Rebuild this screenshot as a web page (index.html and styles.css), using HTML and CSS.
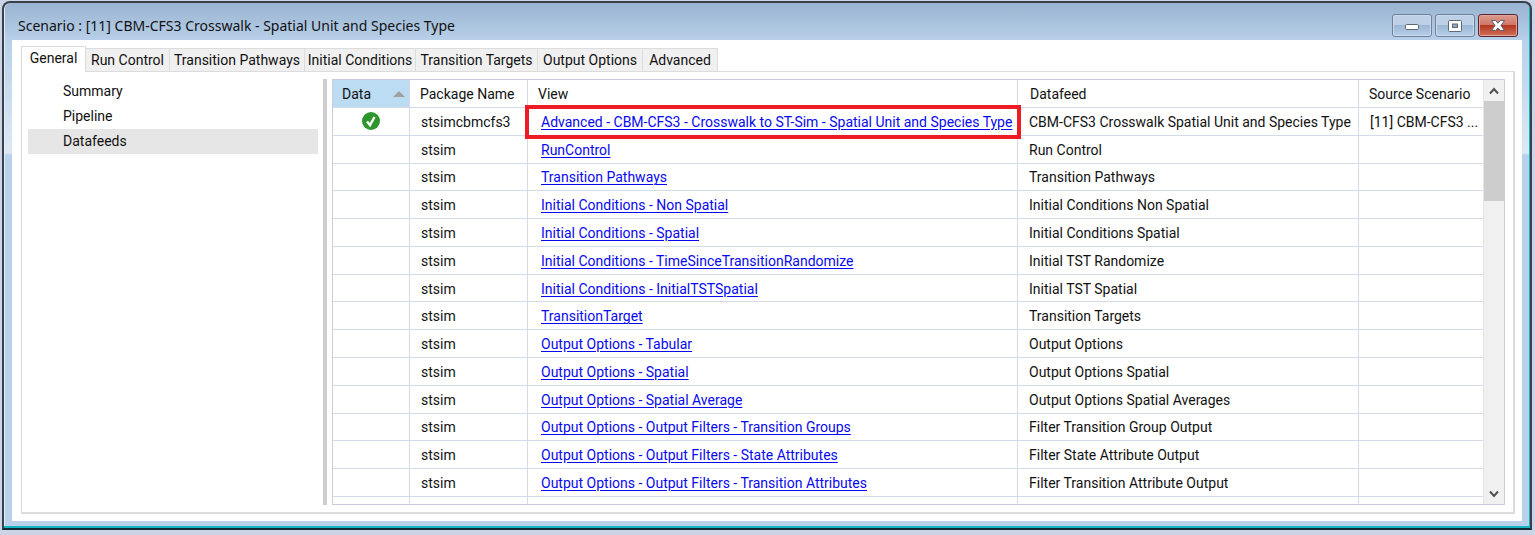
FILE: index.html
```
<!DOCTYPE html>
<html lang="en">
<head>
<meta charset="utf-8">
<title>Scenario : [11] CBM-CFS3 Crosswalk</title>
<link rel="stylesheet" href="styles.css">
</head>
<body>
<main class="window">
  <header class="titlebar">
    <h1 class="title">Scenario : [11] CBM-CFS3 Crosswalk - Spatial Unit and Species Type</h1>
    <div class="controls">
      <button class="control" aria-label="Minimize"><svg width="16" height="14" viewBox="0 0 16 14"><rect x="1.5" y="5.5" width="13" height="5" rx="1" fill="#fff" stroke="#5d6878"/></svg></button>
      <button class="control" aria-label="Maximize"><svg width="16" height="14" viewBox="0 0 16 14"><rect x="1.5" y="1.5" width="13" height="11" rx="1" fill="#fff" stroke="#5d6878"/><rect x="5.5" y="5" width="5" height="3.5" fill="#8ea8c6" stroke="#5d6878"/></svg></button>
      <button class="control close" aria-label="Close"><svg width="16" height="14" viewBox="0 0 16 14"><path d="M1.5 1.5h4L8 4.2l2.500-2.700h4L11 6.500l3.500 5h-4L8 9l-2.500 2.500h-4l3.500-5z" fill="#fff" stroke="#59616f" stroke-linejoin="round"/></svg></button>
    </div>
  </header>
  <div class="client">
    <div class="tabs" role="tablist">
      <button class="tab active" role="tab" aria-selected="true">General</button>
      <button class="tab" role="tab">Run Control</button>
      <button class="tab" role="tab">Transition Pathways</button>
      <button class="tab" role="tab">Initial Conditions</button>
      <button class="tab" role="tab">Transition Targets</button>
      <button class="tab" role="tab">Output Options</button>
      <button class="tab" role="tab">Advanced</button>
    </div>
    <div class="panel">
      <nav class="side">
        <a class="item" href="#">Summary</a>
        <a class="item" href="#">Pipeline</a>
        <a class="item selected" href="#">Datafeeds</a>
      </nav>
      <div class="splitter"></div>
      <div class="grid">
        <table class="feeds">
          <colgroup><col class="c-data"><col class="c-package"><col class="c-view"><col class="c-feed"><col class="c-source"></colgroup>
          <thead>
            <tr><th class="sorted"><span class="sort">Data<svg width="12" height="6" viewBox="0 0 12 6"><path d="M0 6 6 0l6 6z" fill="#a0a0a0"/></svg></span></th><th>Package Name</th><th>View</th><th class="feedhead">Datafeed</th><th>Source Scenario</th></tr>
          </thead>
          <tbody>
            <tr><td class="status"><svg width="18" height="18" viewBox="0 0 18 18" role="img" aria-label="Has data"><circle cx="9" cy="9" r="9" fill="#2c962c"/><path d="m5 9.500 3 3.500 4.500-8" fill="none" stroke="#fff" stroke-width="2.500"/></svg></td><td>stsimcbmcfs3</td><td class="view marked"><a href="#">Advanced - CBM-CFS3 - Crosswalk to ST-Sim - Spatial Unit and Species Type</a></td><td>CBM-CFS3 Crosswalk Spatial Unit and Species Type</td><td>[11] CBM-CFS3 ...</td></tr>
            <tr><td></td><td>stsim</td><td class="view"><a href="#">RunControl</a></td><td>Run Control</td><td></td></tr>
            <tr><td></td><td>stsim</td><td class="view"><a href="#">Transition Pathways</a></td><td>Transition Pathways</td><td></td></tr>
            <tr><td></td><td>stsim</td><td class="view"><a href="#">Initial Conditions - Non Spatial</a></td><td>Initial Conditions Non Spatial</td><td></td></tr>
            <tr><td></td><td>stsim</td><td class="view"><a href="#">Initial Conditions - Spatial</a></td><td>Initial Conditions Spatial</td><td></td></tr>
            <tr><td></td><td>stsim</td><td class="view"><a href="#">Initial Conditions - TimeSinceTransitionRandomize</a></td><td>Initial TST Randomize</td><td></td></tr>
            <tr><td></td><td>stsim</td><td class="view"><a href="#">Initial Conditions - InitialTSTSpatial</a></td><td>Initial TST Spatial</td><td></td></tr>
            <tr><td></td><td>stsim</td><td class="view"><a href="#">TransitionTarget</a></td><td>Transition Targets</td><td></td></tr>
            <tr><td></td><td>stsim</td><td class="view"><a href="#">Output Options - Tabular</a></td><td>Output Options</td><td></td></tr>
            <tr><td></td><td>stsim</td><td class="view"><a href="#">Output Options - Spatial</a></td><td>Output Options Spatial</td><td></td></tr>
            <tr><td></td><td>stsim</td><td class="view"><a href="#">Output Options - Spatial Average</a></td><td>Output Options Spatial Averages</td><td></td></tr>
            <tr><td></td><td>stsim</td><td class="view"><a href="#">Output Options - Output Filters - Transition Groups</a></td><td>Filter Transition Group Output</td><td></td></tr>
            <tr><td></td><td>stsim</td><td class="view"><a href="#">Output Options - Output Filters - State Attributes</a></td><td>Filter State Attribute Output</td><td></td></tr>
            <tr><td></td><td>stsim</td><td class="view"><a href="#">Output Options - Output Filters - Transition Attributes</a></td><td>Filter Transition Attribute Output</td><td></td></tr>
            <tr class="partial"><td></td><td></td><td></td><td></td><td></td></tr>
          </tbody>
        </table>
        <div class="scrollbar">
          <button class="arrow" aria-label="Scroll up"><svg width="10" height="8" viewBox="0 0 10 8"><path d="m1 6.500 4-4.500 4 4.500" fill="none" stroke="#505050" stroke-width="2"/></svg></button>
          <div class="thumb"></div>
          <button class="arrow down" aria-label="Scroll down"><svg width="10" height="8" viewBox="0 0 10 8"><path d="m1 1.500 4 4.500 4-4.500" fill="none" stroke="#505050" stroke-width="2"/></svg></button>
        </div>
      </div>
    </div>
  </div>
</main>
</body>
</html>
```
FILE: styles.css
```
* { box-sizing: border-box; }
body {
  margin: 0;
  height: 100vh;
  padding: 1px 3px 5px 2px;
  background: #ccd5e5;
  color: #111;
  font: 14px/20px Roboto, "Liberation Sans", sans-serif;
  overflow: hidden;
}
button { font: inherit; color: inherit; margin: 0; }
.window {
  display: flex;
  flex-direction: column;
  height: 100%;
  padding: 0 8px 7px 8px;
  border: 2px solid #394047;
  border-bottom-color: #122a35;
  border-radius: 8px 8px 0 0;
  background: linear-gradient(#99b4d1, #b9d1ea 39px, #dce9f5 150px, #b9d1ea 152px);
  box-shadow: inset -1px -2px 0 #13b5c5, inset 1px 0 0 #e4eef8;
}
.titlebar {
  flex: none;
  display: flex;
  align-items: flex-start;
  justify-content: space-between;
  height: 37px;
  padding: 11px 4px 0 6px;
}
.title { margin: 0; font: 14px/24px "Noto Sans", "Open Sans", sans-serif; }
.controls { display: flex; gap: 3px; }
.control {
  display: grid;
  place-items: center;
  width: 40px;
  height: 23px;
  padding: 0;
  border: 1px solid #6f819a;
  border-radius: 3px;
  background: linear-gradient(#bdd0e6 50%, #9db8d5 50%, #b6cfea);
  box-shadow: inset 0 0 0 1px #cbdbed;
}
.close {
  border-color: #5c2430;
  background: linear-gradient(#dc9a8c, #cc7566 50%, #b43722 50%, #cf7258);
  box-shadow: inset 0 0 0 1px #dda59b;
}
.client {
  flex: 1;
  min-height: 0;
  display: flex;
  flex-direction: column;
  padding: 6px 7px 7px 9px;
  background: #fff;
}
.tabs {
  flex: none;
  display: grid;
  grid-template-columns: 65px 84px 135px 111px 122px 105px 75px;
  align-items: end;
  height: 25px;
}
.tab {
  height: 23px;
  padding: 0;
  border: 1px solid #dcdcdc;
  border-left: 0;
  border-bottom: 0;
  background: #f0f0f0;
  white-space: nowrap;
}
.tab.active {
  height: 26px;
  margin-bottom: -1px;
  padding-bottom: 3px;
  border-left: 1px solid #dcdcdc;
  background: #fff;
  z-index: 1;
}
.panel {
  flex: 1;
  min-height: 0;
  display: flex;
  padding: 7px 8px 7px 6px;
  border: 1px solid #dcdcdc;
  border-right-width: 2px;
  border-bottom-width: 2px;
}
.side { flex: none; width: 290px; }
.item {
  display: block;
  height: 25px;
  padding-left: 35px;
  line-height: 25px;
  color: inherit;
  text-decoration: none;
}
.selected { background: #e6e6e6; }
.splitter { flex: none; width: 4px; margin: 0 5px; background: #cdcdcd; }
.grid {
  flex: 1;
  min-width: 0;
  display: flex;
  border: 1px solid #cccce0;
}
.feeds {
  flex: 1;
  width: 100%;
  min-width: 0;
  height: 100%;
  table-layout: fixed;
  border-spacing: 0;
}
.c-data { width: 77px; }
.c-package { width: 118px; }
.c-view { width: 490px; }
.c-source { width: 124px; }
th, td {
  padding: 1px 0 0 11px;
  border-right: 1px solid #d3dae8;
  border-bottom: 1px solid #d3dae8;
  text-align: left;
  font-weight: 400;
  line-height: 20px;
  white-space: nowrap;
}
th { height: 28px; padding: 0 0 0 10px; }
th:last-child, td:last-child { border-right: 0; }
.feedhead { padding-left: 12px; }
.sorted { padding-right: 4px; padding-left: 9px; background: #bcdcf4; }
.sort { display: flex; align-items: center; justify-content: space-between; }
.status { padding: 0; text-align: center; }
.status svg { display: block; margin: 0 auto; }
.view { padding-left: 13px; }
.view a { color: #0808f0; text-underline-offset: 2px; }
.marked { position: relative; }
.marked::after {
  content: "";
  position: absolute;
  inset: -3px -4px -4px -3px;
  border: 4px solid #ed1c24;
  pointer-events: none;
}
.partial td { height: 7px; padding: 0; line-height: 0; border-bottom: 0; }
.scrollbar {
  flex: none;
  display: flex;
  flex-direction: column;
  width: 21px;
  background: #f0f0f0;
  border-left: 1px solid #e4e4ec;
}
.arrow {
  display: grid;
  place-items: center;
  height: 21px;
  padding: 0;
  border: 0;
  background: none;
}
.down { margin-top: auto; }
.thumb { height: 100px; background: #cdcdcd; }
```
